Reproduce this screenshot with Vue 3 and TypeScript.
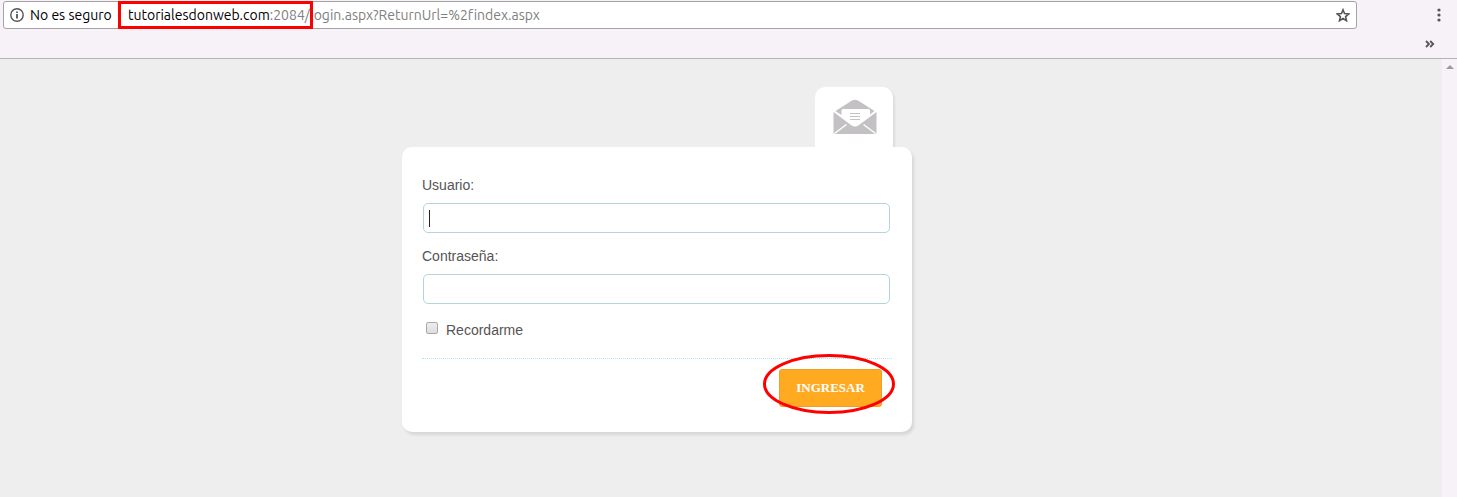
<script setup lang="ts">
import { ref } from 'vue'

const user = ref('')
const password = ref('')
const remember = ref(false)
</script>

<template>
  <div class="window">
    <header class="chrome">
      <div class="toolbar">
        <div class="address">
          <svg class="info" width="14" height="14" viewBox="0 0 14 14" aria-hidden="true">
            <circle cx="7" cy="7" r="6.2" fill="none" stroke="#555" stroke-width="1.4" />
            <path d="M7 6v4.4M7 3.4v1.6" stroke="#555" stroke-width="1.8" />
          </svg>
          <span class="security">No es seguro</span>
          <span class="url"><span class="domain">tutorialesdonweb.com</span>:2084/login.aspx?ReturnUrl=%2findex.aspx</span>
          <button class="icon-button star" type="button" aria-label="Marcador">
            <svg width="14" height="14" viewBox="0 0 14 14">
              <path d="M7 1.800l1.500 3.700 4.300.4-3.200 2.700.9 4.100L7 10.500l-3.500 2.200.9-4.100-3.200-2.700 4.300-.4z" fill="none" stroke="#555" stroke-width="1.6" />
            </svg>
          </button>
          <span class="mark-box"></span>
        </div>
        <button class="icon-button menu" type="button" aria-label="Menú">
          <svg width="4" height="14" viewBox="0 0 4 14" fill="#555">
            <circle cx="2" cy="2" r="1.6" /><circle cx="2" cy="7" r="1.6" /><circle cx="2" cy="12" r="1.6" />
          </svg>
        </button>
      </div>
      <div class="bookmarks">
        <button class="icon-button" type="button" aria-label="Más marcadores">
          <svg width="10" height="8" viewBox="0 0 10 8" fill="none" stroke="#555" stroke-width="1.8">
            <path d="M1 1l3 3-3 3M5.200 1l3 3-3 3" />
          </svg>
        </button>
      </div>
    </header>

    <div class="viewport">
      <main class="page">
        <div class="login">
          <div class="tab">
            <svg width="44" height="36" viewBox="0 0 44 36" aria-hidden="true">
              <g fill="#c3c1c3">
                <path d="M2.500 12L19 1.500Q22 0 25 1.500L41.500 12L37 15.500V11.500Q37 10 35.500 10H10Q8.500 10 8.500 11.500V16z" />
                <path d="M.5 13L18 26Q22 29 26 26L43.500 13V33.500Q43.500 35 42 35H2Q.5 35 .5 33.500z" />
              </g>
              <path d="M17 14.500h10M17 17.500h10M17 20.500h10" stroke="#c3c1c3" />
              <path d="M1.500 34.500L13.500 25.500M42.500 34.500L30.500 25.500" stroke="#fff" stroke-width="1.500" />
            </svg>
          </div>
          <form class="card" @submit.prevent>
            <label for="user">Usuario:</label>
            <div class="field">
              <input id="user" v-model="user" type="text" />
              <span class="caret"></span>
            </div>
            <label for="password">Contraseña:</label>
            <div class="field">
              <input id="password" v-model="password" type="password" />
            </div>
            <div class="remember">
              <input id="remember" v-model="remember" type="checkbox" />
              <label for="remember">Recordarme</label>
            </div>
            <div class="actions">
              <div class="submit">
                <button type="submit">INGRESAR</button>
                <svg class="mark-oval" viewBox="0 0 132 60" aria-hidden="true">
                  <ellipse cx="66" cy="30" rx="64.500" ry="28.500" fill="none" stroke="#f00" stroke-width="3" />
                </svg>
              </div>
            </div>
          </form>
        </div>
      </main>
      <div class="scrollbar">
        <svg width="8" height="4" viewBox="0 0 8 4" aria-hidden="true"><path d="M0 4l4-4 4 4z" fill="#9c9a9c" /></svg>
      </div>
    </div>
  </div>
</template>

<style>
body {
  margin: 0;
}
</style>

<style scoped>
* {
  box-sizing: border-box;
}

.window {
  display: flex;
  flex-direction: column;
  min-height: 100vh;
  font: 14px/20px "Liberation Sans", Arial, sans-serif;
  color: #555;
}

.chrome {
  height: 59px;
  background: #f7f2f7;
  border-bottom: 1px solid #b5b2b5;
  font: 14px/20px Ubuntu, "Noto Sans", sans-serif;
  font-variant-ligatures: none;
}

.toolbar {
  display: flex;
  align-items: center;
  padding: 1px 16px 0 3px;
}

.address {
  position: relative;
  display: flex;
  flex: 1;
  align-items: center;
  height: 28px;
  padding: 0 6px;
  background: #fff;
  border: 1px solid #a5a2a5;
  border-radius: 3px;
  white-space: nowrap;
}

.info {
  margin-right: 6px;
}

.security {
  width: 98px;
  color: #000;
}

.url {
  flex: 1;
  color: #808080;
}

.domain {
  color: #000;
}

.mark-box {
  position: absolute;
  top: -1px;
  left: 114px;
  width: 195px;
  height: 28px;
  border: 3px solid #f00;
}

.icon-button {
  display: flex;
  padding: 0;
  background: none;
  border: 0;
}

.menu {
  margin-left: 80px;
}

.bookmarks {
  display: flex;
  justify-content: flex-end;
  padding: 11px 22px 0 0;
}

.viewport {
  display: flex;
  flex: 1;
  background: #eee;
}

.page {
  flex: 1;
  padding: 28px 128px 28px 0;
}

.scrollbar {
  display: flex;
  flex-direction: column;
  align-items: center;
  width: 15px;
  padding-top: 6px;
  background: #f7f2f7;
}

.login {
  display: flex;
  flex-direction: column;
  max-width: 510px;
  margin: 0 auto;
}

.tab {
  align-self: flex-end;
  width: 78px;
  height: 60px;
  margin-right: 19px;
  padding: 12px 0 0 18px;
  background: #fff;
  border-radius: 10px 10px 0 0;
  box-shadow: 2px 2px 2px #ddd;
}

.card {
  position: relative;
  display: flex;
  flex-direction: column;
  padding: 28px 20px 25px;
  background: #fff;
  border-radius: 10px;
  box-shadow: 2px 3px 3px #d8d6d8;
}

.field {
  position: relative;
  margin: 8px 2px 13px 1px;
}

.field input {
  display: block;
  width: 100%;
  height: 30px;
  padding: 0 6px;
  background: #fff;
  border: 1px solid #b5d3de;
  border-radius: 5px;
  outline: none;
  font: inherit;
}

.caret {
  position: absolute;
  top: 7px;
  left: 6px;
  width: 1px;
  height: 17px;
  background: #222;
}

.remember {
  display: flex;
  align-items: center;
  gap: 8px;
  margin: 3px 0 18px 4px;
}

.remember input {
  appearance: none;
  width: 12px;
  height: 12px;
  margin: 0 0 4px;
  background: linear-gradient(#eee, #ddd);
  border: 1px solid #aaa;
  border-radius: 2px;
}

.remember input:checked {
  background: #777;
}

.actions {
  display: flex;
  justify-content: flex-end;
  padding: 10px 10px 0 0;
  border-top: 1px dotted #b5e3ef;
}

.submit {
  position: relative;
}

.submit button {
  display: block;
  width: 103px;
  height: 38px;
  padding: 0;
  background: #ffaa21;
  border: 1px solid #ef9e29;
  border-radius: 3px;
  color: #fff;
  font: bold 13px/20px "Liberation Serif", "Times New Roman", serif;
}

.mark-oval {
  position: absolute;
  top: -15px;
  left: -16px;
  width: 132px;
  height: 60px;
  pointer-events: none;
}
</style>
